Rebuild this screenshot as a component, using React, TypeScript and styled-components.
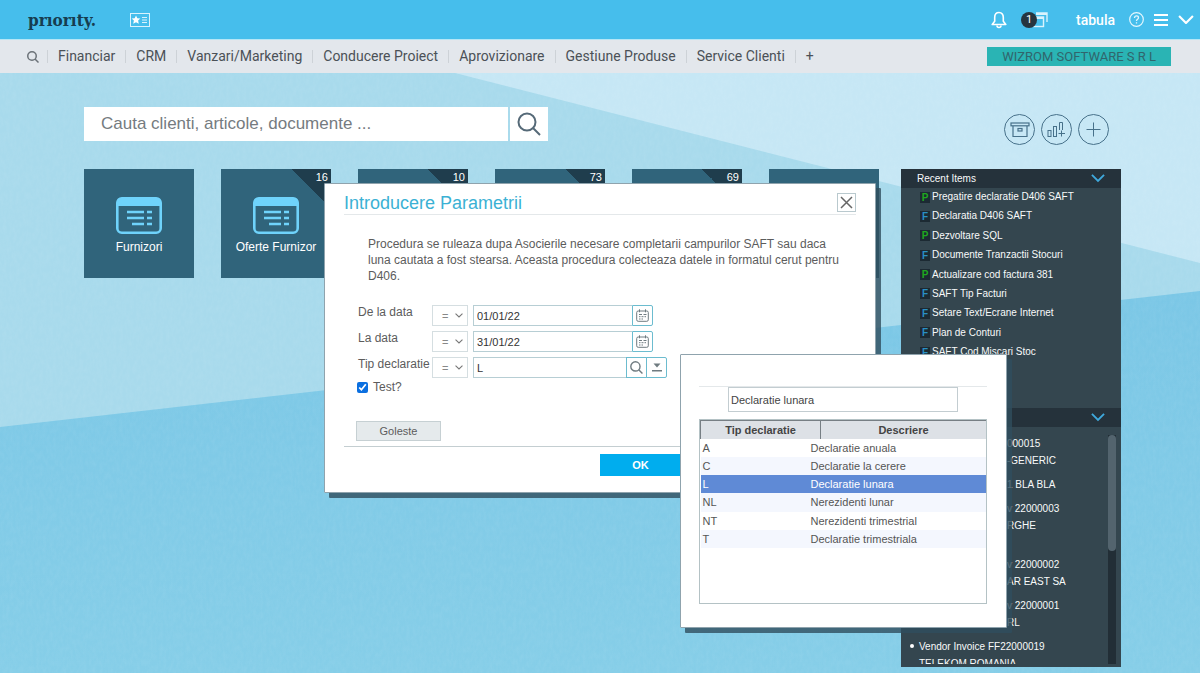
import React from "react";
import styled, { createGlobalStyle } from "styled-components";

const sans = `"Liberation Sans", Arial, sans-serif`;
const roboto = `Roboto, "Liberation Sans", sans-serif`;

const GlobalStyle = createGlobalStyle`
  *, *::before, *::after { box-sizing: border-box; }
  body { margin: 0; font-family: ${sans}; font-size: 12px; color: #555; }
  button, input, select { font-family: inherit; margin: 0; padding: 0; border-radius: 0; }
  button { cursor: pointer; }
  svg { display: block; }
  a { color: inherit; text-decoration: none; }
`;

const Page = styled.div`
  position: relative;
  display: flex;
  flex-direction: column;
  min-height: 100vh;
  overflow: hidden;
`;

/* ---------- top bar ---------- */

const TopBar = styled.header`
  display: flex;
  align-items: center;
  height: 40px;
  padding: 0 6px 0 28px;
  background: #46beec;
  border-bottom: 1px solid #b5e6f6;
  color: #fff;
`;

const Logo = styled.a`
  width: 102px;
  font: bold 17px/40px "DejaVu Serif Condensed", "DejaVu Serif", serif;
  color: #163d50;
`;

const IconButton = styled.button<{ $gap?: number }>`
  display: flex;
  align-items: center;
  border: 0;
  background: none;
  color: inherit;
  margin-left: ${(p) => p.$gap ?? 0}px;
`;

const TopTools = styled.div`
  display: flex;
  align-items: center;
  margin-left: auto;
`;

const CountBadge = styled.span`
  position: relative;
  z-index: 1;
  width: 16px;
  height: 16px;
  margin-right: -4px;
  border-radius: 50%;
  background: #26353f;
  color: #fff;
  font: 11px/16px ${roboto};
  text-align: center;
`;

const UserName = styled.span`
  margin-left: 28px;
  font: 500 14px/40px ${roboto};
`;

/* ---------- menu bar ---------- */

const MenuBar = styled.nav`
  display: flex;
  align-items: center;
  height: 33px;
  padding: 0 29px 0 27px;
  background: #e3e7ec;
  font: 14px/16px ${roboto};
  color: #4b5157;
`;

const MenuSearch = styled(IconButton)`
  padding-right: 8px;
  color: #6b7278;
`;

const MenuLink = styled.a`
  padding: 0 10px;
  border-left: 1px solid #cdd2d7;
  line-height: 13px;
  white-space: nowrap;
`;

const Company = styled.div`
  margin-left: auto;
  padding: 0 15px;
  background: #2ab4b4;
  color: #31656c;
  font-size: 13px;
  line-height: 19px;
  white-space: nowrap;
`;

/* ---------- desktop ---------- */

const Desktop = styled.main`
  position: relative;
  flex: 1;
  display: grid;
  grid-template-columns: minmax(0, 1fr) 220px;
  column-gap: 22px;
  row-gap: 28px;
  align-content: start;
  padding: 34px 79px 6px 84px;
  background: #a8daec;
`;

const Wallpaper = styled.svg`
  position: absolute;
  inset: 0;
  width: 100%;
  height: 100%;
`;

const SearchForm = styled.form`
  position: relative;
  display: flex;
  width: 464px;
  height: 34px;
`;

const SearchInput = styled.input`
  flex: 1;
  min-width: 0;
  padding-left: 17px;
  border: 0;
  background: #fff;
  font-size: 17px;
  color: #555;
  &::placeholder { color: #757b7f; opacity: 1; }
`;

const SearchButton = styled.button`
  display: flex;
  align-items: center;
  justify-content: center;
  width: 38px;
  margin-left: 2px;
  border: 0;
  background: #fff;
  color: #566a78;
`;

const Actions = styled.div`
  position: relative;
  display: flex;
  justify-content: flex-end;
  align-items: flex-end;
  gap: 6px;
  height: 38px;
  margin-bottom: -4px;
  padding-right: 12px;
`;

const RoundButton = styled.button`
  display: flex;
  align-items: center;
  justify-content: center;
  width: 31px;
  height: 31px;
  border: 1px solid #47718a;
  border-radius: 50%;
  background: none;
  color: #47718a;
`;

const Tiles = styled.div`
  position: relative;
  display: grid;
  grid-template-columns: repeat(6, minmax(0, 1fr));
  gap: 27px;
  align-content: start;
`;

const Tile = styled.a`
  position: relative;
  display: flex;
  flex-direction: column;
  align-items: center;
  gap: 6px;
  height: 109px;
  padding-top: 28px;
  background: #30647b;
  color: #fff;
  font-size: 12px;
  line-height: 14px;
  white-space: nowrap;
`;

const TileCount = styled.span`
  position: absolute;
  top: 0;
  right: 0;
  width: 40px;
  height: 40px;
  padding-right: 3px;
  background: linear-gradient(45deg, transparent 50%, #1f3d4d 50%);
  font-size: 11px;
  line-height: 17px;
  text-align: right;
`;

/* ---------- side panels ---------- */

const Side = styled.aside`
  position: relative;
  background: #34464f;
  color: #f8fafa;
`;

const PanelTitle = styled.h2`
  display: flex;
  justify-content: space-between;
  align-items: center;
  height: 19px;
  margin: 0;
  padding: 0 16px;
  background: #25323b;
  font-size: 10px;
  font-weight: normal;
  line-height: 17px;
  color: #f8fafa;
`;

const RecentList = styled.ul`
  display: flex;
  flex-direction: column;
  justify-content: space-between;
  height: 173px;
  margin: 0 0 47px;
  padding: 0 0 0 19px;
  list-style: none;
`;

const RecentItem = styled.li`
  display: flex;
  align-items: center;
  gap: 2px;
  font-size: 10px;
  line-height: 18px;
`;

const Kind = styled.span<{ $kind: string }>`
  width: 10px;
  height: 11px;
  background: #1c2a33;
  color: ${(p) => (p.$kind === "P" ? "#1fa81f" : "#2a8fc4")};
  font-weight: bold;
  line-height: 12px;
  text-align: center;
`;

const Feed = styled.div`
  display: flex;
  height: 240px;
  padding: 8px 5px 3px 0;
  overflow: hidden;
`;

const FeedList = styled.ul`
  flex: 1;
  height: 229px;
  margin: 0;
  padding: 0 0 0 18px;
  overflow: hidden;
  list-style: none;
  font-size: 10px;
  line-height: 17px;
  white-space: nowrap;
`;

const FeedItem = styled.li<{ $covered?: boolean; $tall?: boolean; $dot?: boolean }>`
  position: relative;
  margin-bottom: ${(p) => (p.$tall ? 22 : 7)}px;
  padding-left: ${(p) => (p.$covered ? 88 : 0)}px;
  &::before {
    content: "";
    display: ${(p) => (p.$dot ? "block" : "none")};
    position: absolute;
    left: -9px;
    top: 6px;
    width: 4px;
    height: 4px;
    border-radius: 50%;
    background: #fff;
  }
`;

const FeedLine = styled.div``;

const ScrollTrack = styled.div`
  width: 8px;
  background: #222e36;
`;

const ScrollThumb = styled.div`
  height: 116px;
  border-radius: 4px;
  background: #53646e;
`;

/* ---------- windows ---------- */

const Window = styled.section`
  position: absolute;
  background: #fff;
  border: 1px solid #8fa3ad;
  border-radius: 1px;
  box-shadow: 5px 5px 0 rgba(48, 78, 94, 0.8);
`;

const ParamWindow = styled(Window)`
  left: 324px;
  top: 183px;
  width: 552px;
  height: 310px;
  padding: 9px 19px 0;
`;

const WindowHead = styled.div`
  display: flex;
  justify-content: space-between;
  align-items: flex-start;
  height: 22px;
  border-bottom: 1px solid #e4e8ea;
`;

const WindowTitle = styled.h1`
  margin: 0;
  font-size: 18px;
  font-weight: normal;
  line-height: 20px;
  color: #3bb1d4;
`;

const CloseButton = styled.button`
  display: flex;
  align-items: center;
  justify-content: center;
  width: 19px;
  height: 19px;
  border: 1px solid #b9c9ce;
  background: #fff;
  color: #666;
`;

const Info = styled.p`
  margin: 21px 4px 21px 24px;
  font-size: 12px;
  line-height: 16px;
  color: #5c5c5c;
`;

const Fields = styled.div`
  display: flex;
  flex-direction: column;
  gap: 5px;
  padding-left: 14px;
`;

const Field = styled.div`
  display: flex;
  align-items: flex-start;
  height: 21px;
`;

const FieldLabel = styled.label`
  width: 74px;
  font-size: 12px;
  line-height: 14px;
  color: #5c5c5c;
  white-space: nowrap;
`;

const Operator = styled.span`
  position: relative;
  width: 36px;
  margin-right: 5px;
  color: #777;
  svg { position: absolute; right: 5px; top: 8px; pointer-events: none; }
`;

const OperatorSelect = styled.select`
  appearance: none;
  display: block;
  width: 100%;
  height: 21px;
  padding-left: 9px;
  border: 1px solid #d5dee1;
  background: #fff;
  font-size: 11px;
  color: #888;
`;

const ValueBox = styled.span<{ $wide?: boolean }>`
  display: flex;
  width: ${(p) => (p.$wide ? 194 : 180)}px;
  height: 21px;
`;

const ValueInput = styled.input`
  flex: 1;
  min-width: 0;
  padding-left: 3px;
  border: 1px solid #b7ced4;
  border-right: 0;
  background: #fff;
  font-size: 11px;
  color: #333;
`;

const BoxButton = styled.button`
  display: flex;
  align-items: center;
  justify-content: center;
  width: 21px;
  border: 1px solid #6cbccf;
  background: #fff;
  color: #6f7b80;
  & + & { margin-left: -1px; }
  &:last-child { border-radius: 0 2px 2px 0; }
`;

const CheckLabel = styled.label`
  display: flex;
  align-items: center;
  gap: 5px;
  height: 14px;
  margin-top: 2px;
  padding-left: 13px;
  line-height: 14px;
  color: #5c5c5c;
`;

const Check = styled.input`
  width: 11px;
  height: 11px;
  accent-color: #0b6fe0;
`;

const ClearButton = styled.button`
  display: block;
  width: 85px;
  height: 20px;
  margin: 27px 0 5px 12px;
  border: 1px solid #c6d0d3;
  background: #e5eaec;
  font-size: 11px;
  color: #5c5c5c;
`;

const WindowFoot = styled.div`
  display: flex;
  justify-content: flex-end;
  padding-top: 7px;
  border-top: 1px solid #c4ced1;
`;

const OkButton = styled.button`
  width: 81px;
  height: 22px;
  margin-right: 175px;
  border: 0;
  background: #00adee;
  font-size: 11px;
  font-weight: bold;
  color: #fff;
`;

const PickerWindow = styled(Window)`
  left: 680px;
  top: 354px;
  width: 327px;
  height: 274px;
  padding: 31px 19px 0 18px;
`;

const PickerHead = styled.div`
  border-top: 1px solid #e4e8ea;
  padding: 0 29px 7px;
`;

const PickerInput = styled.input`
  display: block;
  width: 100%;
  height: 25px;
  padding-left: 2px;
  border: 1px solid #c3cdd1;
  background: #fff;
  font-size: 11px;
  color: #444;
`;

const PickerBody = styled.div`
  height: 185px;
  border: 1px solid #b4c2c5;
`;

const PickerTable = styled.table`
  width: 100%;
  height: 128px;
  table-layout: fixed;
  border-collapse: collapse;
  font-size: 11px;
  line-height: 14px;
  color: #555;
`;

const Column = styled.col<{ $width?: number }>`
  width: ${(p) => (p.$width ? `${p.$width}px` : "auto")};
`;

const HeadCell = styled.th`
  height: 18px;
  padding: 0;
  border-top: 1px solid #777f84;
  border-left: 1px solid #777f84;
  background: #dde1e6;
  color: #444;
  font-weight: bold;
`;

const Row = styled.tr<{ $tone: string }>`
  background: ${(p) =>
    p.$tone === "selected" ? "#5f8ad6" : p.$tone === "alt" ? "#f4f7fe" : "#fff"};
  color: ${(p) => (p.$tone === "selected" ? "#fff" : "inherit")};
`;

const Cell = styled.td`
  padding: 0 0 0 2px;
`;

/* ---------- icons ---------- */

const Chevron = ({ size, color = "currentColor", stroke = 2 }: { size: number; color?: string; stroke?: number }) => (
  <svg width={size} height={size * 0.6} viewBox="0 0 15 9" fill="none" stroke={color} strokeWidth={stroke}>
    <path d="M1 1l6.500 6.500L14 1" />
  </svg>
);

const Magnifier = ({ size, stroke }: { size: number; stroke: number }) => (
  <svg width={size} height={size} viewBox="0 0 24 24" fill="none" stroke="currentColor" strokeWidth={stroke}>
    <circle cx="10" cy="10" r="8.500" />
    <path d="M16 16l7 7" />
  </svg>
);

const CalendarIcon = () => (
  <svg width="13" height="13" viewBox="0 0 13 13" fill="none" stroke="currentColor">
    <rect x="0.700" y="2" width="11.600" height="10.300" rx="1.500" />
    <path d="M3.500 0.300v3M9.500 0.300v3" />
    <path d="M3 5.500h3M7.500 5.500h3M3 7.700h1.500M5.500 7.700h2M8.500 7.700h1.500M3 10h1.500M5.500 10h1.500" />
  </svg>
);

const FormIcon = () => (
  <svg width="46" height="37" viewBox="0 0 46 37" fill="none">
    <rect x="1.300" y="1.300" width="43.400" height="34.400" rx="4.500" stroke="#6fd3fb" strokeWidth="2.600" />
    <path d="M1 9V5a4 4 0 014-4h36a4 4 0 014 4v4z" fill="#6fd3fb" />
    <path
      d="M11 15h17M31 15h5M11 21h17M31 21h5M16 27h12M31 27h5"
      stroke="#6fd3fb"
      strokeWidth="2.500"
    />
  </svg>
);

/* ---------- data ---------- */

const menu = [
  "Financiar",
  "CRM",
  "Vanzari/Marketing",
  "Conducere Proiect",
  "Aprovizionare",
  "Gestiune Produse",
  "Service Clienti",
  "+",
];

const tiles: { name?: string; count?: number }[] = [
  { name: "Furnizori" },
  { name: "Oferte Furnizor", count: 16 },
  { count: 10 },
  { count: 73 },
  { count: 69 },
  {},
];

const recent = [
  ["P", "Pregatire declaratie D406 SAFT"],
  ["F", "Declaratia D406 SAFT"],
  ["P", "Dezvoltare SQL"],
  ["F", "Documente Tranzactii Stocuri"],
  ["P", "Actualizare cod factura 381"],
  ["F", "SAFT Tip Facturi"],
  ["F", "Setare Text/Ecrane Internet"],
  ["F", "Plan de Conturi"],
  ["F", "SAFT Cod Miscari Stoc"],
];

const feed: { lines: string[]; covered?: boolean; tall?: boolean; dot?: boolean }[] = [
  { lines: ["000015", "-GENERIC"], covered: true },
  { lines: ["1 BLA BLA"], covered: true },
  { lines: ["v 22000003", "RGHE"], covered: true, tall: true },
  { lines: ["v 22000002", "AR EAST SA"], covered: true },
  { lines: ["v 22000001", "RL"], covered: true },
  { lines: ["Vendor Invoice FF22000019", "TELEKOM ROMANIA"], dot: true },
];

const types = [
  ["A", "Declaratie anuala"],
  ["C", "Declaratie la cerere"],
  ["L", "Declaratie lunara"],
  ["NL", "Nerezidenti lunar"],
  ["NT", "Nerezidenti trimestrial"],
  ["T", "Declaratie trimestriala"],
];

const OperatorPicker = ({ label }: { label: string }) => (
  <Operator>
    <OperatorSelect aria-label={label} defaultValue="=">
      <option>=</option>
    </OperatorSelect>
    <Chevron size={8} />
  </Operator>
);

export default function App() {
  return (
    <Page>
      <GlobalStyle />
      <TopBar>
        <Logo href="#">prıorıty.</Logo>
        <IconButton aria-label="Favorites">
          <svg width="20" height="14" viewBox="0 0 20 14" fill="none" stroke="#d9f3fd">
            <rect x="0.500" y="0.500" width="19" height="13" />
            <path d="M12 4.500h5M12 7h5M12 9.500h5" />
            <path
              d="M6 2.500l1.300 2.800 3 .300-2.200 2 .700 3.100L6 9.200l-2.800 1.500.700-3.100-2.200-2 3-.300z"
              fill="#fff"
              stroke="none"
            />
          </svg>
        </IconButton>
        <TopTools>
          <IconButton aria-label="Notifications">
            <svg width="16" height="18" viewBox="0 0 16 18" fill="none" stroke="#fff" strokeWidth="1.600">
              <path d="M8 1.500c-3 0-4.300 2.200-4.300 5v3.700L1.200 13.500h13.600l-2.500-3.300V6.500c0-2.800-1.300-5-4.300-5z" strokeLinejoin="round" />
              <path d="M6 14.500a2 2 0 004 0" />
            </svg>
          </IconButton>
          <IconButton $gap={14} aria-label="Open windows">
            <CountBadge>1</CountBadge>
            <svg width="15" height="16" viewBox="0 0 15 16" fill="none" stroke="#d9f3fd">
              <path d="M3 1h11v9" strokeWidth="1.400" />
              <path d="M3 2h11" strokeWidth="2" />
              <rect x="1" y="5" width="9.500" height="9.500" strokeWidth="1.400" />
              <path d="M1 6h9.500" strokeWidth="2" />
            </svg>
          </IconButton>
          <UserName>tabula</UserName>
          <IconButton $gap={14} aria-label="Help">
            <svg width="15" height="15" viewBox="0 0 15 15" fill="none" stroke="#e4f7fe">
              <circle cx="7.500" cy="7.500" r="6.800" strokeWidth="1.200" />
              <path d="M5.500 6c0-1.400.900-2.100 2-2.100s2 .700 2 1.800c0 1.500-2 1.500-2 3.200M7.500 10.200v1.300" strokeWidth="1.300" />
            </svg>
          </IconButton>
          <IconButton $gap={10} aria-label="Menu">
            <svg width="14" height="14" viewBox="0 0 14 14" stroke="#fff" strokeWidth="2">
              <path d="M0 2h14M0 7h14M0 12h14" />
            </svg>
          </IconButton>
          <IconButton $gap={10} aria-label="Collapse">
            <Chevron size={16} color="#fff" />
          </IconButton>
        </TopTools>
      </TopBar>

      <MenuBar>
        <MenuSearch aria-label="Search menu">
          <Magnifier size={12} stroke={3} />
        </MenuSearch>
        {menu.map((m) => (
          <MenuLink key={m} href="#">
            {m}
          </MenuLink>
        ))}
        <Company>WIZROM SOFTWARE S R L</Company>
      </MenuBar>

      <Desktop>
        <Wallpaper viewBox="0 0 1200 600" preserveAspectRatio="none" aria-hidden="true">
          <defs>
            <linearGradient id="lower" x1="0" y1="0" x2="0" y2="1">
              <stop offset="0" stopColor="#7bc7e6" />
              <stop offset="1" stopColor="#86cee8" />
            </linearGradient>
            <filter id="linen" x="0" y="0" width="100%" height="100%">
              <feTurbulence type="fractalNoise" baseFrequency="0.3 0.15" numOctaves="3" seed="4" />
              <feColorMatrix values="0 0 0 0 1  0 0 0 0 1  0 0 0 0 1  0.5 0 0 0 -0.15" />
            </filter>
          </defs>
          <path d="M455 0H1200V190z" fill="#c6e7f5" />
          <path d="M0 354L1200 218V600H0z" fill="url(#lower)" />
          <rect width="1200" height="600" filter="url(#linen)" opacity="0.180" />
        </Wallpaper>

        <SearchForm role="search">
          <SearchInput aria-label="Cauta" placeholder="Cauta clienti, articole, documente ..." />
          <SearchButton type="button" aria-label="Cauta">
            <Magnifier size={24} stroke={2} />
          </SearchButton>
        </SearchForm>

        <Actions>
          <RoundButton aria-label="Archive">
            <svg width="20" height="16" viewBox="0 0 20 16" fill="none" stroke="currentColor" strokeWidth="1.200">
              <rect x="1" y="1" width="18" height="2.800" />
              <path d="M3 4v10.500h14V4" />
              <rect x="8" y="6.500" width="4" height="2.500" />
            </svg>
          </RoundButton>
          <RoundButton aria-label="Add chart">
            <svg width="19" height="17" viewBox="0 0 19 17" fill="none" stroke="currentColor">
              <rect x="1" y="9.500" width="3" height="6" />
              <rect x="6.500" y="5.500" width="3" height="10" />
              <path d="M12.500 9V1.500h3V9M14.500 9.500v6M11.500 12.500h6.500" />
            </svg>
          </RoundButton>
          <RoundButton aria-label="Add">
            <svg width="15" height="15" viewBox="0 0 15 15" stroke="currentColor">
              <path d="M7.500 0.500v14M0.500 7.500h14" />
            </svg>
          </RoundButton>
        </Actions>

        <Tiles>
          {tiles.map((t, i) => (
            <Tile key={i} href="#">
              {t.name && <FormIcon />}
              {t.name}
              {t.count && <TileCount>{t.count}</TileCount>}
            </Tile>
          ))}
        </Tiles>

        <Side>
          <PanelTitle>
            Recent Items
            <Chevron size={14} color="#3fa9dc" />
          </PanelTitle>
          <RecentList>
            {recent.map(([kind, name]) => (
              <RecentItem key={name}>
                <Kind $kind={kind}>{kind}</Kind>
                <a href="#">{name}</a>
              </RecentItem>
            ))}
          </RecentList>
          <PanelTitle>
            <span />
            <Chevron size={14} color="#3fa9dc" />
          </PanelTitle>
          <Feed>
            <FeedList>
              {feed.map((f) => (
                <FeedItem key={f.lines[0]} $covered={f.covered} $tall={f.tall} $dot={f.dot}>
                  {f.lines.map((l) => (
                    <FeedLine key={l}>{l}</FeedLine>
                  ))}
                </FeedItem>
              ))}
            </FeedList>
            <ScrollTrack>
              <ScrollThumb />
            </ScrollTrack>
          </Feed>
        </Side>
      </Desktop>

      <ParamWindow role="dialog" aria-label="Introducere Parametrii">
        <WindowHead>
          <WindowTitle>Introducere Parametrii</WindowTitle>
          <CloseButton aria-label="Close">
            <svg width="13" height="13" viewBox="0 0 13 13" stroke="currentColor" strokeWidth="1.500">
              <path d="M1 1l11 11M12 1L1 12" />
            </svg>
          </CloseButton>
        </WindowHead>
        <Info>
          Procedura se ruleaza dupa Asocierile necesare completarii campurilor SAFT sau daca luna cautata a fost
          stearsa. Aceasta procedura colecteaza datele in formatul cerut pentru D406.
        </Info>
        <Fields>
          <Field>
            <FieldLabel htmlFor="from">De la data</FieldLabel>
            <OperatorPicker label="Operator de la data" />
            <ValueBox>
              <ValueInput id="from" defaultValue="01/01/22" />
              <BoxButton aria-label="Calendar">
                <CalendarIcon />
              </BoxButton>
            </ValueBox>
          </Field>
          <Field>
            <FieldLabel htmlFor="to">La data</FieldLabel>
            <OperatorPicker label="Operator la data" />
            <ValueBox>
              <ValueInput id="to" defaultValue="31/01/22" />
              <BoxButton aria-label="Calendar">
                <CalendarIcon />
              </BoxButton>
            </ValueBox>
          </Field>
          <Field>
            <FieldLabel htmlFor="type">Tip declaratie</FieldLabel>
            <OperatorPicker label="Operator tip declaratie" />
            <ValueBox $wide>
              <ValueInput id="type" defaultValue="L" />
              <BoxButton aria-label="Search">
                <Magnifier size={13} stroke={2.6} />
              </BoxButton>
              <BoxButton aria-label="Choose">
                <svg width="10" height="9" viewBox="0 0 10 9" fill="currentColor">
                  <path d="M1.500 0.500h7L5 4.500zM0 7h10v1.400H0z" />
                </svg>
              </BoxButton>
            </ValueBox>
          </Field>
        </Fields>
        <CheckLabel>
          <Check type="checkbox" defaultChecked />
          Test?
        </CheckLabel>
        <ClearButton>Goleste</ClearButton>
        <WindowFoot>
          <OkButton>OK</OkButton>
        </WindowFoot>
      </ParamWindow>

      <PickerWindow role="dialog" aria-label="Tip declaratie">
        <PickerHead>
          <PickerInput aria-label="Descriere" defaultValue="Declaratie lunara" />
        </PickerHead>
        <PickerBody>
          <PickerTable>
            <colgroup>
              <Column $width={108} />
              <Column $width={12} />
              <Column />
            </colgroup>
            <thead>
              <tr>
                <HeadCell colSpan={2}>Tip declaratie</HeadCell>
                <HeadCell>Descriere</HeadCell>
              </tr>
            </thead>
            <tbody>
              {types.map(([code, name], i) => (
                <Row key={code} $tone={code === "L" ? "selected" : i % 2 ? "alt" : "plain"}>
                  <Cell>{code}</Cell>
                  <Cell colSpan={2}>{name}</Cell>
                </Row>
              ))}
            </tbody>
          </PickerTable>
        </PickerBody>
      </PickerWindow>
    </Page>
  );
}
